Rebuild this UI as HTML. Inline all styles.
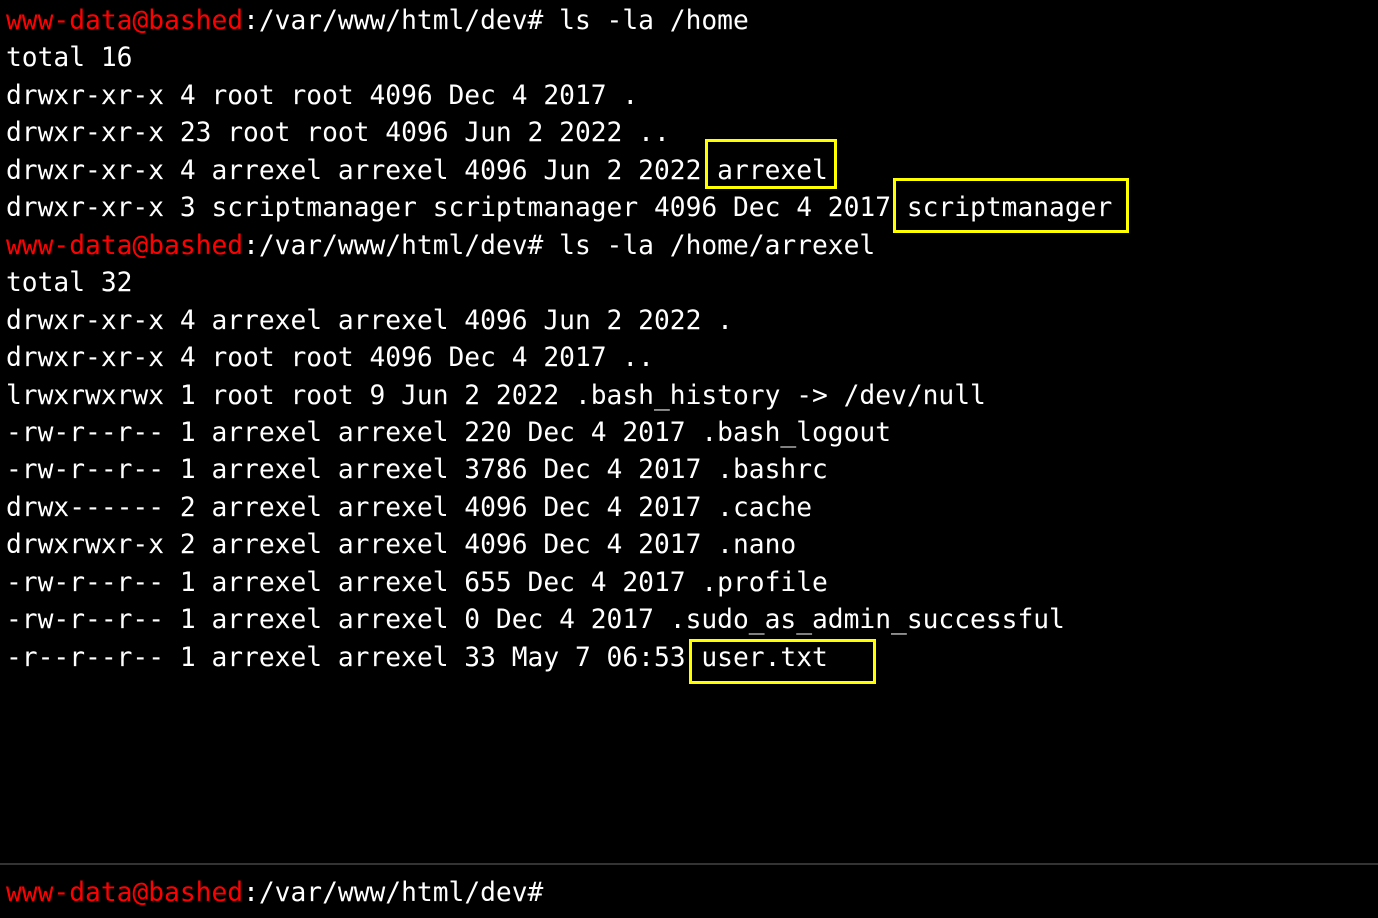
<!DOCTYPE html>
<html><head><meta charset="utf-8"><style>
html,body{margin:0;padding:0;background:#000;width:1378px;height:918px;overflow:hidden}
body{position:relative;font-family:"DejaVu Sans Mono","Liberation Mono",monospace;font-size:26.25px;color:#fff}
.t{position:absolute;left:6px;top:3px;line-height:37.45px;white-space:pre}
.r{color:#ff0000}
.box{position:absolute;border:3px solid #ffff00;box-sizing:border-box}
.sep{position:absolute;left:0;top:863px;width:1378px;height:2px;background:#333}
</style></head><body>
<div class="t"><span class="r">www-data@bashed</span>:/var/www/html/dev# ls -la /home
total 16
drwxr-xr-x 4 root root 4096 Dec 4 2017 .
drwxr-xr-x 23 root root 4096 Jun 2 2022 ..
drwxr-xr-x 4 arrexel arrexel 4096 Jun 2 2022 arrexel
drwxr-xr-x 3 scriptmanager scriptmanager 4096 Dec 4 2017 scriptmanager
<span class="r">www-data@bashed</span>:/var/www/html/dev# ls -la /home/arrexel
total 32
drwxr-xr-x 4 arrexel arrexel 4096 Jun 2 2022 .
drwxr-xr-x 4 root root 4096 Dec 4 2017 ..
lrwxrwxrwx 1 root root 9 Jun 2 2022 .bash_history -&gt; /dev/null
-rw-r--r-- 1 arrexel arrexel 220 Dec 4 2017 .bash_logout
-rw-r--r-- 1 arrexel arrexel 3786 Dec 4 2017 .bashrc
drwx------ 2 arrexel arrexel 4096 Dec 4 2017 .cache
drwxrwxr-x 2 arrexel arrexel 4096 Dec 4 2017 .nano
-rw-r--r-- 1 arrexel arrexel 655 Dec 4 2017 .profile
-rw-r--r-- 1 arrexel arrexel 0 Dec 4 2017 .sudo_as_admin_successful
-r--r--r-- 1 arrexel arrexel 33 May 7 06:53 user.txt</div>
<div class="box" style="left:705px;top:139px;width:132px;height:50px"></div>
<div class="box" style="left:893px;top:178px;width:236px;height:55px"></div>
<div class="box" style="left:689px;top:639px;width:187px;height:45px"></div>
<div class="sep"></div>
<div class="t" style="top:875px"><span class="r">www-data@bashed</span>:/var/www/html/dev#</div>
</body></html>
